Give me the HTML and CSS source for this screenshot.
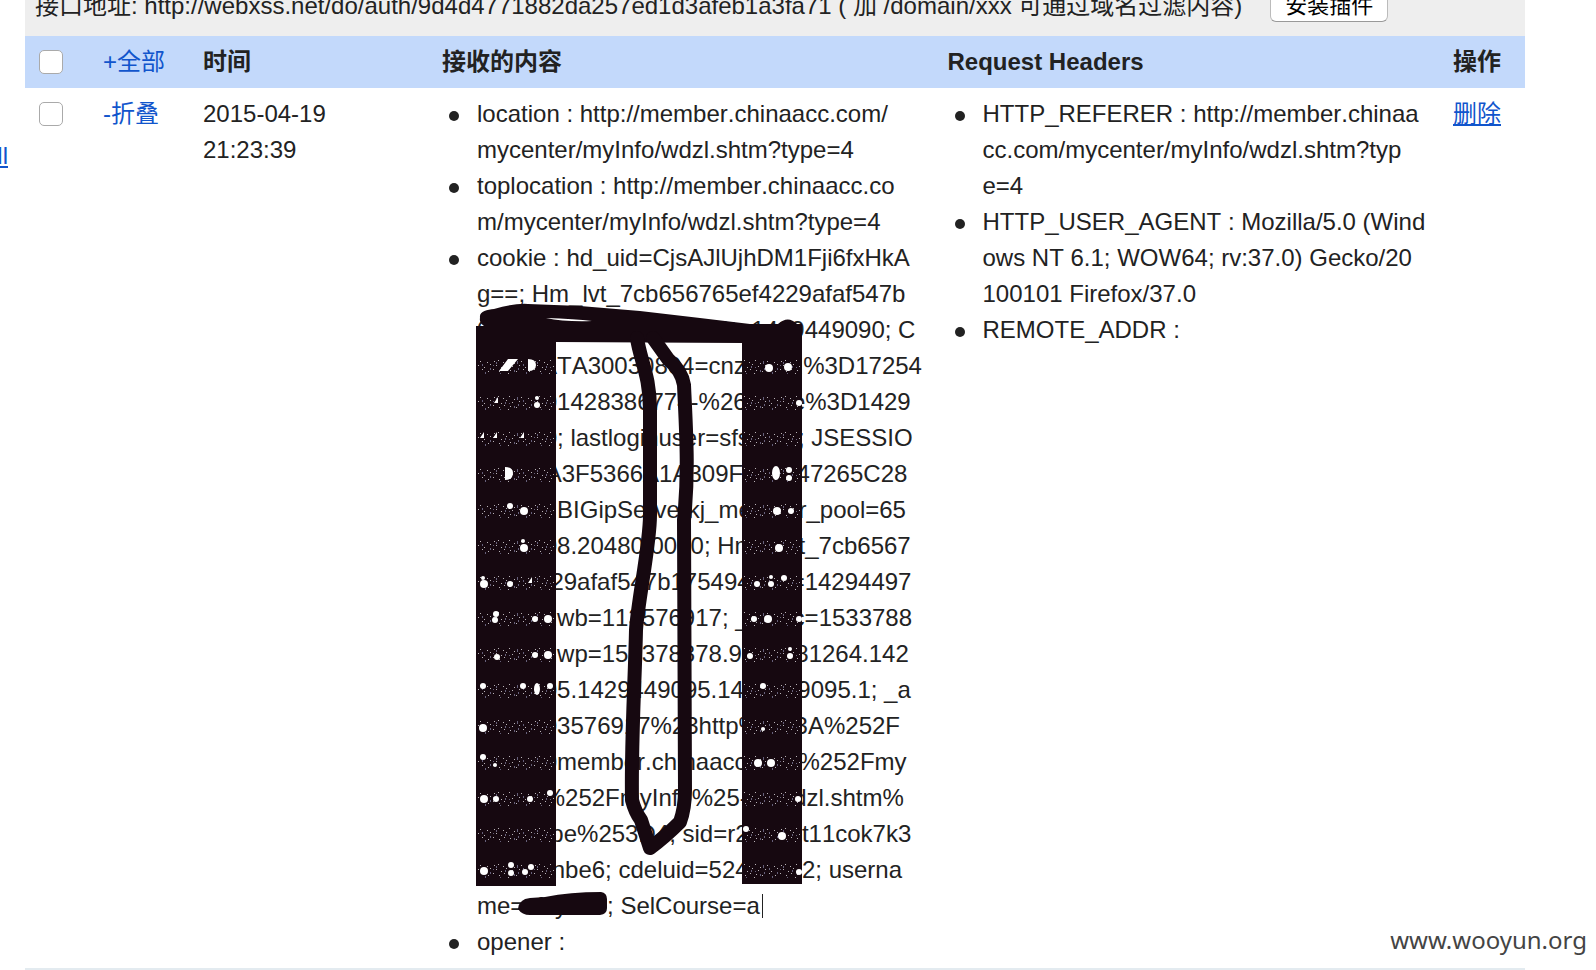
FILE: index.html
```html
<!DOCTYPE html>
<html lang="zh-CN">
<head>
<meta charset="utf-8">
<title>接收的内容</title>
<link rel="stylesheet" href="styles.css">
</head>
<body>
<div class="page">
  <nav class="side"><a href="#">ll</a></nav>
  <main class="main">
    <div class="toolbar">
      <span>接口地址: http://webxss.net/do/auth/9d4d4771882da257ed1d3afeb1a3fa71 ( 加 /domain/xxx 可通过域名过滤内容)</span>
      <button type="button" class="install">安装插件</button>
    </div>
    <table class="records">
      <colgroup>
        <col class="c-check"><col class="c-fold"><col class="c-time"><col><col><col class="c-act">
      </colgroup>
      <thead>
        <tr>
          <th class="check"><input type="checkbox" class="box" aria-label="全部"></th>
          <th><a class="fold" href="#">+全部</a></th>
          <th>时间</th>
          <th>接收的内容</th>
          <th>Request Headers</th>
          <th>操作</th>
        </tr>
      </thead>
      <tbody>
        <tr>
          <td class="check"><input type="checkbox" class="box" aria-label="2015-04-19 21:23:39"></td>
          <td><a class="fold" href="#">-折叠</a></td>
          <td>2015-04-19<br>21:23:39</td>
          <td>
            <ul class="fields">
              <li>location : http://member.chinaacc.com/<br>mycenter/myInfo/wdzl.shtm?type=4</li>
              <li>toplocation : http://member.chinaacc.co<br>m/mycenter/myInfo/wdzl.shtm?type=4</li>
              <li>cookie : hd_uid=CjsAJlUjhDM1Fji6fxHkA<br>g==; Hm_lvt_7cb656765ef4229afaf547b<br>0000000000000000000t=1429449090; C<br>NZZDATA30030804=cnzz_eid%3D17254<br>0000001428386774-%26ntime%3D1429<br>000000; lastloginuser=sfs000-; JSESSIO<br>NID=0A3F5366A1A309F000047265C28<br>00000; BIGipServerkj_member_pool=65<br>0000008.20480.0000; Hm_lpvt_7cb6567<br>65ef4229afaf547b175494000=14294497<br>00; _adwb=113576917; _adwc=1533788<br>00; _adwp=153378378.9000081264.142<br>0000005.1429449095.1400009095.1; _a<br>0000003576917%23http%25-3A%252F<br>000000member.chinaacc.com%252Fmy<br>center%252FmyInfo%25-2Fwdzl.shtm%<br>253Ftype%253D4; sid=r20000t11cok7k3<br>00000-nbe6; cdeluid=52400062; userna<br>me=sfsy000; SelCourse=a<span class="caret"></span>
                <svg class="marks" viewBox="477 240 460 684" aria-hidden="true">
                  <defs>
                    <pattern id="grain" width="41" height="36" patternUnits="userSpaceOnUse">
                      <g class="dust">
                        <path d="M2 2h1v1h-1zM6 1h1v1h-1zM11 3h1v1h-1zM17 1h1v1h-1zM22 4h1v1h-1zM29 2h1v1h-1zM36 3h1v1h-1zM4 6h1v1h-1zM9 8h1v1h-1zM14 5h1v1h-1zM20 7h1v1h-1zM27 6h1v1h-1zM33 8h1v1h-1zM39 5h1v1h-1zM1 10h1v1h-1zM7 12h1v1h-1zM12 10h1v1h-1zM18 11h1v1h-1zM24 12h1v1h-1zM31 10h1v1h-1zM37 12h1v1h-1zM3 15h1v1h-1zM10 16h1v1h-1zM16 14h1v1h-1zM21 17h1v1h-1zM28 15h1v1h-1zM35 16h1v1h-1z"/>
                        <path class="faint" d="M4 3h1v2h-1zM13 7h1v2h-1zM25 2h1v3h-1zM31 5h1v2h-1zM8 14h1v2h-1zM22 11h1v2h-1zM34 13h1v2h-1zM39 9h1v2h-1zM17 8h1v1h-1zM1 6h1v1h-1zM26 9h1v2h-1z"/>
                      </g>
                    </pattern>
                  </defs>
                  <g class="ink">
                    <path d="M480 318C479 311 487 310 494 309Q515 303 528 304L580 306L640 311L700 318L750 324L778 324Q788 315 797 324Q802 328 802 338L742 343L556 342V326H484Q479 323 480 318Z"/>
                    <path d="M476 326h80v560h-80zM742 324h60v560h-60z"/>
                    <path d="M518 909Q519 899 530 898L545 897Q570 892 601 892Q607 893 607 899V908Q607 914 600 915H530Q522 915 518 909Z"/>
                  </g>
                  <path class="stroke" d="M637 338C640 360 650 375 650 410V515C650 545 638 600 636 630C635 680 631 740 632 800Q635 812 641 820L650 848Q665 837 680 822Q685 808 685 790C684 720 684 620 684 520C689 470 686 430 684 385Q682 371 668 359L653 338"/>
                  <path class="white" d="M546 318Q565 322 592 321Q575 319 546 318Z"/>
                  <path fill="url(#grain)" transform="translate(0 -1)" d="M478 358h76v17h-76zM478 394h76v17h-76zM478 430h76v17h-76zM478 466h76v17h-76zM478 502h76v17h-76zM478 538h76v17h-76zM478 574h76v17h-76zM478 610h76v17h-76zM478 646h76v17h-76zM478 682h76v17h-76zM478 718h76v17h-76zM478 754h76v17h-76zM478 790h76v17h-76zM478 826h76v17h-76zM478 862h76v17h-76zM744 358h56v17h-56zM744 394h56v17h-56zM744 430h56v17h-56zM744 466h56v17h-56zM744 502h56v17h-56zM744 538h56v17h-56zM744 574h56v17h-56zM744 610h56v17h-56zM744 646h56v17h-56zM744 682h56v17h-56zM744 718h56v17h-56zM744 754h56v17h-56zM744 790h56v17h-56zM744 826h56v17h-56zM744 862h56v17h-56z"/>
                  <g class="white">
                    <path d="M499 371L508 359H518L508 371ZM528 359q8 0 8 6q0 6-8 6zM480 438l4-6v6zM493 438l4-6v6zM520 438l4-6v6zM494 403l4-6v6zM505 467q8 0 8 6q0 7-8 7zM528 583l4-6v6z"/>
                    <g>
                      <circle cx="537" cy="398" r="2"/><circle cx="537" cy="405" r="3"/>
                      <circle cx="510" cy="506" r="3"/><circle cx="524" cy="511" r="4"/>
                      <circle cx="524" cy="548" r="4"/><circle cx="523" cy="541" r="2"/>
                      <circle cx="484" cy="584" r="4"/><circle cx="483" cy="578" r="2"/><circle cx="510" cy="584" r="3"/>
                      <circle cx="496" cy="614" r="3"/><circle cx="495" cy="620" r="3"/><circle cx="535" cy="619" r="3"/><circle cx="548" cy="619" r="4"/>
                      <circle cx="497" cy="657" r="3"/><circle cx="535" cy="655" r="3"/><circle cx="548" cy="655" r="4"/>
                      <circle cx="483" cy="686" r="3"/><circle cx="523" cy="686" r="3"/><ellipse cx="537" cy="689" rx="3" ry="6"/><circle cx="550" cy="686" r="3"/>
                      <circle cx="483" cy="728" r="4"/><circle cx="483" cy="757" r="3"/><circle cx="495" cy="765" r="2"/>
                      <circle cx="484" cy="799" r="4"/><circle cx="496" cy="799" r="3"/><circle cx="530" cy="799" r="3"/><circle cx="550" cy="793" r="3"/>
                      <circle cx="484" cy="871" r="4"/><circle cx="511" cy="865" r="3"/><circle cx="511" cy="873" r="3"/><circle cx="531" cy="867" r="3"/><circle cx="525" cy="872" r="3"/>
                      <circle cx="769" cy="368" r="4"/><circle cx="788" cy="367" r="4"/><circle cx="799" cy="403" r="3"/>
                      <ellipse cx="776" cy="473" rx="4" ry="7"/><circle cx="789" cy="470" r="3"/><circle cx="789" cy="478" r="3"/>
                      <circle cx="777" cy="511" r="4"/><circle cx="791" cy="511" r="3"/><circle cx="779" cy="548" r="4"/>
                      <circle cx="757" cy="584" r="3"/><circle cx="771" cy="584" r="3"/><circle cx="784" cy="578" r="3"/><circle cx="771" cy="577" r="2"/>
                      <circle cx="754" cy="619" r="3"/><circle cx="768" cy="619" r="4"/><circle cx="799" cy="619" r="3"/>
                      <circle cx="750" cy="656" r="3"/><circle cx="790" cy="656" r="3"/><circle cx="790" cy="649" r="2"/>
                      <circle cx="763" cy="686" r="3"/><circle cx="763" cy="729" r="2"/>
                      <circle cx="758" cy="763" r="4"/><circle cx="771" cy="763" r="4"/><circle cx="798" cy="799" r="3"/>
                      <circle cx="782" cy="836" r="4"/><circle cx="746" cy="829" r="3"/><circle cx="799" cy="872" r="3"/>
                    </g>
                  </g>
                </svg>
              </li>
              <li>opener :</li>
            </ul>
          </td>
          <td>
            <ul class="fields">
              <li>HTTP_REFERER : http://member.chinaa<br>cc.com/mycenter/myInfo/wdzl.shtm?typ<br>e=4</li>
              <li>HTTP_USER_AGENT : Mozilla/5.0 (Wind<br>ows NT 6.1; WOW64; rv:37.0) Gecko/20<br>100101 Firefox/37.0</li>
              <li>REMOTE_ADDR :</li>
            </ul>
          </td>
          <td><a class="delete" href="#">删除</a></td>
        </tr>
      </tbody>
    </table>
  </main>
  <div class="watermark">www.wooyun.org</div>
</div>
</body>
</html>
```
FILE: styles.css
```css
* { box-sizing: border-box; }

body {
  margin: 0;
  background: #fff;
  color: #222;
  font: 24px/36px "Liberation Sans", "Noto Sans CJK SC", sans-serif;
}

a { color: #15c; }

.page {
  position: relative;
  display: flex;
}

.side {
  display: flex;
  flex: none;
  justify-content: flex-end;
  align-items: flex-start;
  width: 25px;
  padding: 138px 17px 0 0;
}

.main {
  flex: 1;
  min-width: 0;
  margin-right: 71px;
}

/* Only the lower edge of the toolbar is in view */
.toolbar {
  display: flex;
  align-items: flex-end;
  gap: 28px;
  height: 36px;
  padding: 0 10px 12px;
  overflow: hidden;
  background: #eee;
  white-space: nowrap;
}

.install {
  flex: none;
  height: 42px;
  margin-bottom: 2px;
  padding: 4px 14px 0;
  border: 1px solid #bbb;
  border-bottom-color: #999;
  border-radius: 6px;
  background: #fff;
  color: #000;
  font: 22px/36px "Noto Sans CJK SC", sans-serif;
}

.records {
  width: 100%;
  table-layout: fixed;
  border-collapse: separate;
  border-spacing: 0;
}

.c-check { width: 70px; }
.c-fold { width: 100px; }
.c-time { width: 239px; }
.c-act { width: 80px; }

th, td {
  padding: 8px;
  text-align: left;
  vertical-align: top;
  white-space: nowrap;
}

th {
  background: #c3d9fb;
  font-weight: 700;
}

td {
  font-kerning: none;
  border-bottom: 2px solid #e3ebf0;
}

.check { padding: 14px 14px 0; }

.box {
  display: block;
  appearance: none;
  width: 24px;
  height: 24px;
  margin: 0;
  border: 1px solid #aaa;
  border-radius: 5px;
  background: #fff;
}

.fold {
  font-weight: 400;
  text-decoration: none;
}

.fields {
  margin: 0;
  padding: 0 0 0 35px;
  list-style: none;
}

.fields li { position: relative; }

.fields li::before {
  content: "";
  position: absolute;
  top: 15px;
  left: -28px;
  width: 10px;
  height: 10px;
  border-radius: 50%;
  background: #222;
}

.caret {
  display: inline-block;
  width: 1px;
  height: 24px;
  margin-left: 2px;
  background: #222;
  vertical-align: -4px;
}

.marks {
  position: absolute;
  top: 0;
  left: 0;
  width: 460px;
  height: 684px;
  overflow: visible;
}

.ink { fill: #160810; }

.stroke {
  fill: none;
  stroke: #160810;
  stroke-width: 14px;
  stroke-linecap: round;
  stroke-linejoin: round;
}

.white { fill: #fff; }
.dust { fill: #b9b4b8; }
.faint { fill: #66607a; }

.watermark {
  position: absolute;
  right: 9px;
  bottom: 12px;
  color: #444;
  font-family: "Noto Sans", "Open Sans", sans-serif;
}
```
